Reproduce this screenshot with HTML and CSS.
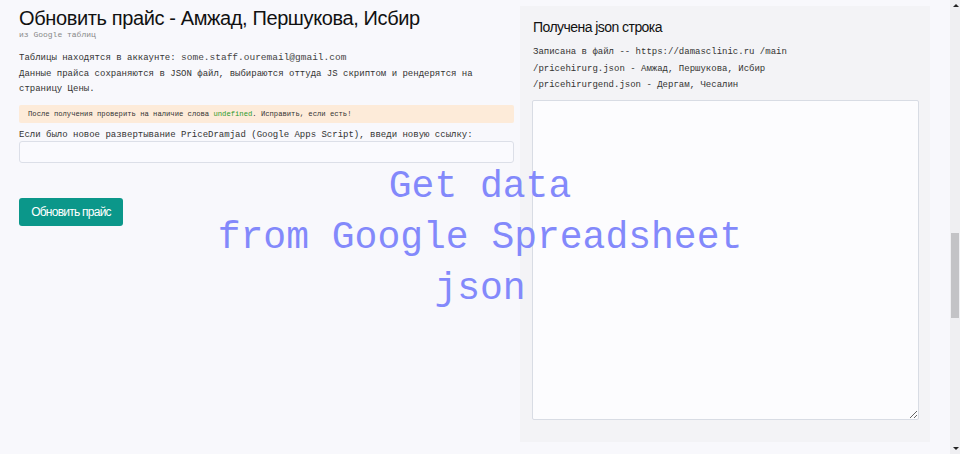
FILE: index.html
```html
<!DOCTYPE html>
<html lang="ru">
<head>
<meta charset="utf-8">
<title>Обновить прайс</title>
<link rel="stylesheet" href="styles.css">
</head>
<body>
<div class="page">
  <section class="left">
    <h1 class="title">Обновить прайс - Амжад, Першукова, Исбир</h1>
    <div class="subtitle">из Google таблиц</div>
    <p class="info">Таблицы находятся в аккаунте: <span class="email">some.staff.ouremail@gmail.com</span><br>Данные прайса сохраняются в JSON файл, выбираются оттуда JS скриптом и рендерятся на страницу Цены.</p>
    <div class="alert">После получения проверить на наличие слова <span class="ok">undefined</span>. Исправить, если есть!</div>
    <label class="label" for="url">Если было новое развертывание PriceDramjad (Google Apps Script), введи новую ссылку:</label>
    <input class="input" id="url" type="text">
    <button class="btn" type="button">Обновить прайс</button>
  </section>
  <section class="right">
    <h2 class="panel-title">Получена json строка</h2>
    <p class="panel-text">Записана в файл -- https://damasclinic.ru /main<br>/pricehirurg.json - Амжад, Першукова, Исбир<br>/pricehirurgend.json - Дергам, Чесалин</p>
    <textarea class="output"></textarea>
  </section>
</div>
<div class="watermark">Get data<br>from Google Spreadsheet<br>json</div>
<div class="scrollbar" aria-hidden="true">
  <span class="sb-arrow sb-up"></span>
  <span class="sb-thumb"></span>
  <span class="sb-arrow sb-down"></span>
</div>
</body>
</html>
```
FILE: styles.css
```css
body {
  margin: 0;
  background: #f8f8fc;
  font-family: "Liberation Sans", Arial, sans-serif;
  color: #111;
}
.page {
  display: flex;
  align-items: flex-start;
  padding: 6px 0 0 19px;
  gap: 6px;
}
.left {
  width: 495px;
  display: flex;
  flex-direction: column;
  align-items: flex-start;
}
.title {
  margin: 0;
  font-weight: normal;
  font-size: 20px;
  letter-spacing: -0.38px;
  line-height: 24px;
}
.subtitle {
  font-family: "Liberation Mono", "Courier New", monospace;
  font-size: 8px;
  color: #888;
  line-height: 10px;
}
.info {
  margin: 10px 0 0;
  font-family: "Liberation Mono", "Courier New", monospace;
  font-size: 9px;
  line-height: 15.5px;
  color: #333;
}
.email {
  font-size: 9.5px;
  color: #444;
}
.alert {
  margin-top: 7px;
  align-self: stretch;
  background: #fdebd9;
  border-radius: 2px;
  padding: 5px 9px;
  font-family: "Liberation Mono", "Courier New", monospace;
  font-size: 7.2px;
  line-height: 8px;
  color: #333;
}
.ok {
  color: #2a9a2a;
}
.label {
  margin-top: 7px;
  font-family: "Liberation Mono", "Courier New", monospace;
  font-size: 9px;
  line-height: 11px;
  color: #333;
}
.input {
  margin: 0;
  align-self: stretch;
  height: 22px;
  box-sizing: border-box;
  border: 1px solid #dcdfe8;
  border-radius: 3px;
  background: #fafafe;
}
.btn {
  margin-top: 35px;
  width: 104px;
  height: 28px;
  border: 0;
  border-radius: 3px;
  background: #0b978a;
  color: #fff;
  font-family: "Liberation Sans", Arial, sans-serif;
  font-size: 12px;
  letter-spacing: -0.75px;
  padding: 0;
}
.right {
  width: 410px;
  box-sizing: border-box;
  background: #f3f3f6;
  padding: 12px 12px 22px 13px;
  display: flex;
  flex-direction: column;
}
.panel-title {
  margin: 0;
  font-weight: normal;
  font-size: 14px;
  letter-spacing: -0.55px;
  line-height: 18px;
  color: #111;
}
.panel-text {
  margin: 8px 0 0;
  font-family: "Liberation Mono", "Courier New", monospace;
  font-size: 9px;
  line-height: 16.5px;
  color: #333;
}
.output {
  margin: 6px 0 0 -1px;
  width: 387px;
  height: 320px;
  box-sizing: border-box;
  border: 1px solid #d8dce4;
  border-radius: 2px;
  background: #fcfcfe;
}
.watermark {
  position: absolute;
  left: 0;
  top: 161px;
  width: 960px;
  text-align: center;
  font-family: "Liberation Mono", "DejaVu Sans Mono", monospace;
  font-size: 38px;
  line-height: 51px;
  color: #8389fb;
  pointer-events: none;
}
.scrollbar {
  position: fixed;
  top: 0;
  right: 0;
  width: 10px;
  height: 100%;
  background: #efeff2;
}
.sb-thumb {
  position: absolute;
  left: 1px;
  top: 233px;
  width: 8px;
  height: 85px;
  background: #c3c3c6;
}
.sb-arrow {
  position: absolute;
  left: 3px;
  width: 0;
  height: 0;
  border-left: 3px solid transparent;
  border-right: 3px solid transparent;
}
.sb-up {
  top: 4px;
  border-bottom: 3px solid #222;
}
.sb-down {
  bottom: 4px;
  border-top: 3px solid #222;
}
```
